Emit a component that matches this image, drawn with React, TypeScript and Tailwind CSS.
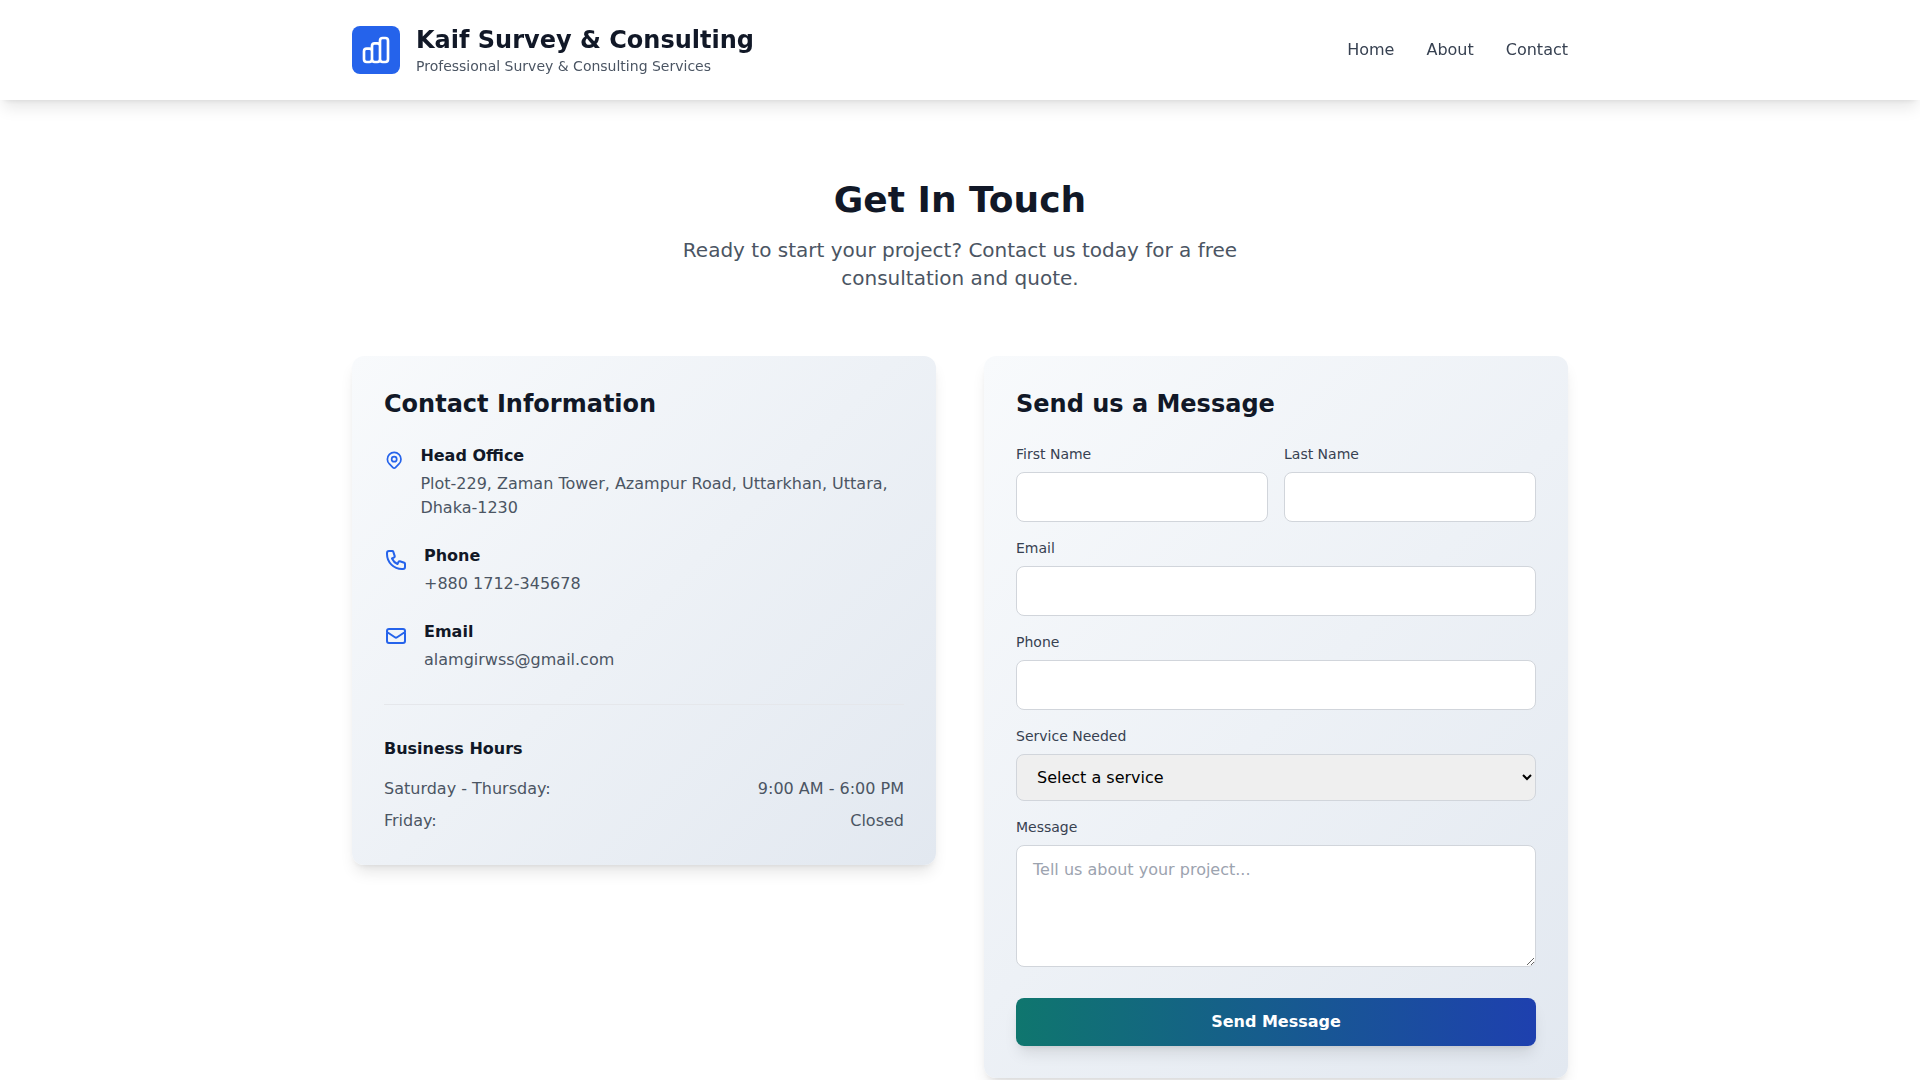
import React from "react";

const navLinks = ["Home", "About", "Contact"];

const contacts = [
  {
    title: "Head Office",
    text: "Plot-229, Zaman Tower, Azampur Road, Uttarkhan, Uttara, Dhaka-1230",
    paths: [
      "M17.657 16.657L13.414 20.9a1.998 1.998 0 01-2.827 0l-4.244-4.243a8 8 0 1111.314 0z",
      "M15 11a3 3 0 11-6 0 3 3 0 016 0z",
    ],
  },
  {
    title: "Phone",
    text: "+880 1712-345678",
    paths: [
      "M3 5a2 2 0 012-2h3.28a1 1 0 01.948.684l1.498 4.493a1 1 0 01-.502 1.21l-2.257 1.13a11.042 11.042 0 005.516 5.516l1.13-2.257a1 1 0 011.21-.502l4.493 1.498a1 1 0 01.684.949V19a2 2 0 01-2 2h-1C9.716 21 3 14.284 3 6V5z",
    ],
  },
  {
    title: "Email",
    text: "alamgirwss@gmail.com",
    paths: [
      "M3 8l7.89 5.26a2 2 0 002.22 0L21 8M5 19h14a2 2 0 002-2V7a2 2 0 00-2-2H5a2 2 0 00-2 2v10a2 2 0 002 2z",
    ],
  },
];

const hours = [
  ["Saturday - Thursday:", "9:00 AM - 6:00 PM"],
  ["Friday:", "Closed"],
];

const cardClass =
  "rounded-xl bg-[linear-gradient(135deg,#f8fafc_0%,#e2e8f0_100%)] p-8 shadow-[0_10px_15px_-3px_rgba(0,0,0,0.1),0_4px_6px_-4px_rgba(0,0,0,0.1)]";
const fieldClass = "block w-full rounded-lg border border-[#d1d5db] bg-white px-4 py-3";

function Icon({ paths, className }: { paths: string[]; className: string }) {
  return (
    <svg className={className} fill="none" stroke="currentColor" viewBox="0 0 24 24">
      {paths.map((d) => (
        <path key={d} strokeLinecap="round" strokeLinejoin="round" strokeWidth="2" d={d} />
      ))}
    </svg>
  );
}

function Field({ label, children }: { label: string; children: React.ReactNode }) {
  return (
    <div>
      <label className="mb-2 block text-sm font-medium text-[#374151]">{label}</label>
      {children}
    </div>
  );
}

function Header() {
  return (
    <header className="sticky top-0 z-50 bg-white/95 shadow-[0_10px_15px_-3px_rgba(0,0,0,0.1),0_4px_6px_-4px_rgba(0,0,0,0.1)] backdrop-blur-sm">
      <div className="mx-auto flex max-w-7xl items-center justify-between px-8 py-6">
        <div className="flex items-center gap-4">
          <div className="flex h-12 w-12 items-center justify-center rounded-lg bg-[#2563eb]">
            <Icon
              className="h-8 w-8 text-white"
              paths={[
                "M9 19v-6a2 2 0 00-2-2H5a2 2 0 00-2 2v6a2 2 0 002 2h2a2 2 0 002-2zm0 0V9a2 2 0 012-2h2a2 2 0 012 2v10m-6 0a2 2 0 002 2h2a2 2 0 002-2m0 0V5a2 2 0 012-2h2a2 2 0 012 2v14a2 2 0 01-2 2h-2a2 2 0 01-2-2z",
              ]}
            />
          </div>
          <div>
            <h1 className="text-2xl font-bold text-[#111827]">Kaif Survey &amp; Consulting</h1>
            <p className="text-sm text-[#4b5563]">Professional Survey &amp; Consulting Services</p>
          </div>
        </div>
        <nav className="flex gap-8">
          {navLinks.map((l) => (
            <a key={l} href="#" className="font-medium text-[#374151]">
              {l}
            </a>
          ))}
        </nav>
      </div>
    </header>
  );
}

export default function App() {
  return (
    <div className="h-screen overflow-hidden bg-white font-['DejaVu_Sans',sans-serif]">
      <Header />
      <section className="mx-auto max-w-7xl px-8 py-20">
        <div className="mb-16 text-center">
          <h2 className="mb-4 text-4xl font-bold text-[#111827]">Get In Touch</h2>
          <p className="mx-auto max-w-2xl text-xl text-[#4b5563]">
            Ready to start your project? Contact us today for a free consultation and quote.
          </p>
        </div>
        <div className="grid grid-cols-2 items-start gap-12">
          <div className={cardClass}>
            <h3 className="mb-6 text-2xl font-bold text-[#111827]">Contact Information</h3>
            <div className="space-y-6">
              {contacts.map((c) => (
                <div key={c.title} className="flex items-start gap-4">
                  <Icon className="mt-1 h-6 w-6 text-[#2563eb]" paths={c.paths} />
                  <div>
                    <h4 className="mb-1 font-semibold text-[#111827]">{c.title}</h4>
                    <p className="text-[#4b5563]">{c.text}</p>
                  </div>
                </div>
              ))}
            </div>
            <div className="mt-8 border-t border-[#e5e7eb] pt-8">
              <h4 className="mb-4 font-semibold text-[#111827]">Business Hours</h4>
              <div className="space-y-2 text-[#4b5563]">
                {hours.map(([day, time]) => (
                  <div key={day} className="flex justify-between">
                    <span>{day}</span>
                    <span>{time}</span>
                  </div>
                ))}
              </div>
            </div>
          </div>
          <div className={cardClass}>
            <h3 className="mb-6 text-2xl font-bold text-[#111827]">Send us a Message</h3>
            <form className="space-y-4">
              <div className="grid grid-cols-2 gap-4">
                <Field label="First Name">
                  <input type="text" className={fieldClass} />
                </Field>
                <Field label="Last Name">
                  <input type="text" className={fieldClass} />
                </Field>
              </div>
              <Field label="Email">
                <input type="email" className={fieldClass} />
              </Field>
              <Field label="Phone">
                <input type="tel" className={fieldClass} />
              </Field>
              <Field label="Service Needed">
                <select className="block w-full rounded-lg border border-[#d1d5db] bg-[#efefef] px-4 py-3 text-black">
                  <option>Select a service</option>
                </select>
              </Field>
              <Field label="Message">
                <textarea
                  rows={4}
                  placeholder="Tell us about your project..."
                  className="block w-full rounded-lg border border-[#d1d5db] bg-white px-4 py-3 placeholder:text-[#9ca3af]"
                />
              </Field>
              <button
                type="button"
                className="mt-[31px] block w-full rounded-lg bg-[linear-gradient(to_right,#0f766e,#1e40af)] px-6 py-3 font-semibold text-white shadow-[0_10px_15px_-3px_rgba(0,0,0,0.1),0_4px_6px_-4px_rgba(0,0,0,0.1)]"
              >
                Send Message
              </button>
            </form>
          </div>
        </div>
      </section>
    </div>
  );
}
